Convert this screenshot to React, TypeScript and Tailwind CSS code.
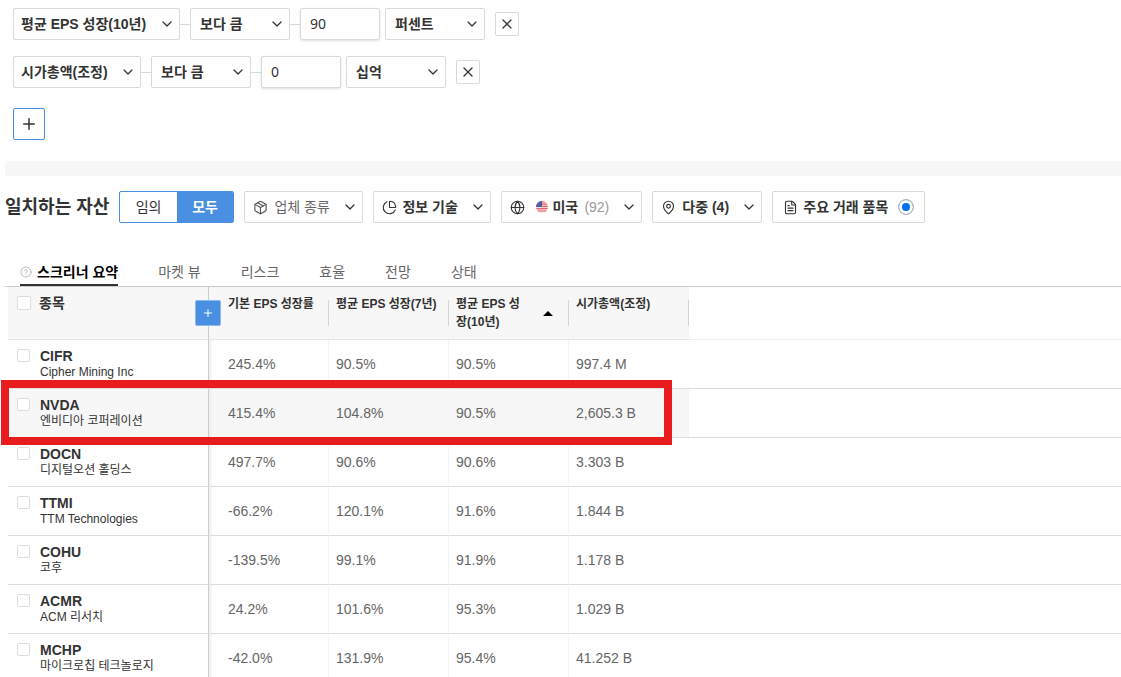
import type { ReactNode } from 'react'
import { ChevronDown, CircleHelp, FileText, Globe, MapPin, Package, PieChart, Plus, X } from 'lucide-react'

const rows = [
  { ticker: 'CIFR', name: 'Cipher Mining Inc', values: ['245.4%', '90.5%', '90.5%', '997.4 M'] },
  { ticker: 'NVDA', name: '엔비디아 코퍼레이션', values: ['415.4%', '104.8%', '90.5%', '2,605.3 B'], marked: true },
  { ticker: 'DOCN', name: '디지털오션 홀딩스', values: ['497.7%', '90.6%', '90.6%', '3.303 B'] },
  { ticker: 'TTMI', name: 'TTM Technologies', values: ['-66.2%', '120.1%', '91.6%', '1.844 B'] },
  { ticker: 'COHU', name: '코후', values: ['-139.5%', '99.1%', '91.9%', '1.178 B'] },
  { ticker: 'ACMR', name: 'ACM 리서치', values: ['24.2%', '101.6%', '95.3%', '1.029 B'] },
  { ticker: 'MCHP', name: '마이크로칩 테크놀로지', values: ['-42.0%', '131.9%', '95.4%', '41.252 B'] },
]

const columns = ['기본 EPS 성장률', '평균 EPS 성장(7년)', '평균 EPS 성장(10년)', '시가총액(조정)']

const tabs = ['마켓 뷰', '리스크', '효율', '전망', '상태']

function Select({ label, value, className }: { label: string; value: string; className: string }) {
  return (
    <div className={`relative h-8 ${className}`}>
      <select
        aria-label={label}
        className="h-full w-full appearance-none rounded-xs border border-[#d9d9d9] bg-white pr-6 font-bold text-[#333]"
      >
        <option>{value}</option>
      </select>
      <ChevronDown size={16} strokeWidth={1.9} className="pointer-events-none absolute top-2 right-[5px]" />
    </div>
  )
}

function Line() {
  return <div className="w-[10px] border-t border-[#d9d9d9]" />
}

type FilterRowProps = { metric: string; width: string; amount: string; unit: string }

function FilterRow({ metric, width, amount, unit }: FilterRowProps) {
  return (
    <div className="flex items-center">
      <Select label="지표" value={metric} className={`${width} [&>select]:pl-[7px]`} />
      <Line />
      <Select label="조건" value="보다 큼" className="w-[100px] [&>select]:pl-[9px]" />
      <Line />
      <input
        aria-label="값"
        defaultValue={amount}
        className="mr-[5px] h-8 w-20 rounded-xs border border-[#d9d9d9] px-[9px] pb-[2px] font-['Noto_Sans',sans-serif] text-[#333] shadow-sm"
      />
      <Select label="단위" value={unit} className="w-[100px] [&>select]:pl-[9px]" />
      <button
        aria-label="삭제"
        className="ml-[10px] flex size-6 items-center justify-center rounded-xs border border-[#d9d9d9]"
      >
        <X size={16} strokeWidth={1.9} />
      </button>
    </div>
  )
}

type PickerProps = { icon: ReactNode; value: string; muted?: boolean; children?: ReactNode }

function Picker({ icon, value, muted, children }: PickerProps) {
  return (
    <label className="flex h-8 items-center rounded-xs border border-[#d9d9d9] pr-1 pl-2">
      {icon}
      <select
        aria-label={value}
        className={`appearance-none bg-transparent ${muted ? 'text-[#666]' : 'font-bold text-[#333]'}`}
      >
        <option>{value}</option>
      </select>
      {children}
      <ChevronDown size={16} strokeWidth={1.9} className="ml-3" />
    </label>
  )
}

function UsFlag() {
  return (
    <svg viewBox="0 0 12 12" className="mr-1 size-3">
      <clipPath id="flag-circle">
        <circle cx="6" cy="6" r="6" />
      </clipPath>
      <g clipPath="url(#flag-circle)">
        <rect width="12" height="12" fill="#f6dfe2" />
        <path d="M0 .8h12M0 3.1h12M0 5.4h12M0 7.7h12M0 10h12" stroke="#ee5f6b" strokeWidth="1.2" />
        <rect width="6" height="6" fill="#4a5a9c" />
        <path d="M1 2h4M1 4h4" stroke="#98a2cb" strokeWidth=".6" strokeDasharray=".7 .7" />
      </g>
    </svg>
  )
}

function Check({ label, className }: { label: string; className: string }) {
  return (
    <input
      type="checkbox"
      aria-label={label}
      className={`shrink-0 appearance-none rounded-xs border border-[#ddd] bg-white ${className}`}
    />
  )
}

function AssetTable() {
  return (
    <table className="ml-2 w-[calc(100%-8px)] table-fixed border-separate border-spacing-0 text-left">
      <colgroup>
        <col className="w-[201px]" />
        <col className="w-[120px]" />
        <col className="w-[120px]" />
        <col className="w-[120px]" />
        <col className="w-[120px]" />
        <col />
      </colgroup>
      <thead>
        <tr className="h-[53px] align-top">
          <th className="relative border-r border-b border-r-[#ccc] border-b-[#e5e5e5] bg-[#f7f7f7] p-0">
            <div className="flex gap-2 pt-2 pl-[9px] leading-4">
              <Check label="모두 선택" className="mt-px size-[14px]" />
              종목
            </div>
            <button
              aria-label="열 추가"
              className="absolute top-[13px] -right-[13px] z-10 flex size-[26px] items-center justify-center rounded-xs border border-[#8db9ee] bg-[#4a90e2] text-white"
            >
              <Plus size={12} strokeWidth={2} />
            </button>
          </th>
          {columns.map((column, i) => (
            <th key={column} className="border-b border-[#e5e5e5] bg-[#f7f7f7] p-0 text-xs leading-[18px]">
              <div className="relative h-[52px] pt-2">
                <div className={i === 0 ? 'pl-[19px]' : i === 2 ? 'pr-10 pl-[7px]' : 'pl-[7px]'}>{column}</div>
                {i === 2 && (
                  <svg viewBox="0 0 10 5" className="absolute top-6 right-4 h-[5px] w-[10px]">
                    <path d="M0 5 5 0l5 5z" fill="#000" />
                  </svg>
                )}
                <div className="absolute top-[13px] right-0 h-[26px] border-r border-[#d5d5d5]" />
              </div>
            </th>
          ))}
          <td className="border-b border-[#eee]" />
        </tr>
      </thead>
      <tbody>
        {rows.map((row) => (
          <tr
            key={row.ticker}
            className={`h-[49px] [&>*]:border-b [&>*]:border-b-[#ddd] ${row.marked ? '[&>*:not(:last-child)]:bg-[#f7f7f7]' : ''}`}
          >
            <th className="relative border-r border-r-[#ccc] p-0 align-top font-normal">
              <div className="flex gap-[10px] pt-2 pl-[9px]">
                <Check label={row.ticker} className="mt-px size-[13px]" />
                <div>
                  <div className="leading-4 font-bold">{row.ticker}</div>
                  <div className="text-xs leading-[17px]">{row.name}</div>
                </div>
              </div>
              <div className="absolute inset-y-0 -right-[5px] w-1 bg-linear-to-r from-[#eee] to-transparent" />
              {row.marked && (
                <div className="pointer-events-none absolute -top-[9px] -left-[7px] z-20 h-[65px] w-[671px] border-8 border-[#e81c1c]" />
              )}
            </th>
            {row.values.map((value, i) => (
              <td
                key={i}
                className={`py-0 pr-0 text-[#666] ${i === 0 ? 'pl-[19px]' : 'pl-[7px]'} ${i < 3 ? 'border-r border-r-[#f5f5f5]' : ''}`}
              >
                {value}
              </td>
            ))}
            <td />
          </tr>
        ))}
      </tbody>
    </table>
  )
}

export default function App() {
  return (
    <main className="bg-white pt-2 font-['Liberation_Sans','Noto_Sans_CJK_KR',sans-serif] text-sm text-[#333]">
      <section className="flex flex-col gap-4 pl-[13px]">
        <FilterRow metric="평균 EPS 성장(10년)" width="w-[167px]" amount="90" unit="퍼센트" />
        <FilterRow metric="시가총액(조정)" width="w-32" amount="0" unit="십억" />
        <button
          aria-label="조건 추가"
          className="mt-1 flex size-8 items-center justify-center rounded-xs border border-[#4a90e2]"
        >
          <Plus size={18} strokeWidth={2} />
        </button>
      </section>

      <div className="mt-[21px] ml-[5px] h-[15px] bg-[#f7f7f7]" />

      <section className="mt-[15px] ml-[5px] flex items-center gap-[10px]">
        <h1 className="text-lg font-bold whitespace-nowrap">일치하는 자산</h1>
        <div className="flex h-8 w-[115px] overflow-hidden rounded-xs border border-[#4a90e2]">
          <button className="flex-1">임의</button>
          <button className="flex-1 bg-[#4a90e2] font-bold text-white">모두</button>
        </div>
        <Picker icon={<Package size={15} strokeWidth={1.8} className="mr-[6px] text-[#555]" />} value="업체 종류" muted />
        <Picker icon={<PieChart size={15} strokeWidth={1.8} className="mr-[5px]" />} value="정보 기술" />
        <Picker
          icon={
            <>
              <Globe size={15} strokeWidth={1.8} className="mr-[11px]" />
              <UsFlag />
            </>
          }
          value="미국"
        >
          <span className="ml-[6px] text-[#999]">(92)</span>
        </Picker>
        <Picker icon={<MapPin size={15} strokeWidth={1.8} className="mr-[6px]" />} value="다중 (4)" />
        <label className="flex h-8 items-center rounded-xs border border-[#d9d9d9] px-[10px] font-bold">
          <FileText size={15} strokeWidth={1.8} className="mr-[5px]" />
          주요 거래 품목
          <input
            type="radio"
            defaultChecked
            className="ml-[10px] size-4 appearance-none rounded-full border border-[#bbb] bg-[#0070f0] shadow-[inset_0_0_0_3px_white]"
          />
        </label>
      </section>

      <nav className="mt-9 ml-[5px] flex gap-10 border-b border-[#ccc] pl-[15px]">
        <a href="#summary" className="flex h-[27px] items-center gap-[5px] border-b-2 border-[#333] font-bold text-black">
          <CircleHelp size={12} strokeWidth={1.6} className="text-[#aaa]" />
          스크리너 요약
        </a>
        {tabs.map((tab) => (
          <a key={tab} href="#view" className="flex h-[27px] items-center border-b-2 border-transparent text-[#666]">
            {tab}
          </a>
        ))}
      </nav>

      <AssetTable />
    </main>
  )
}
